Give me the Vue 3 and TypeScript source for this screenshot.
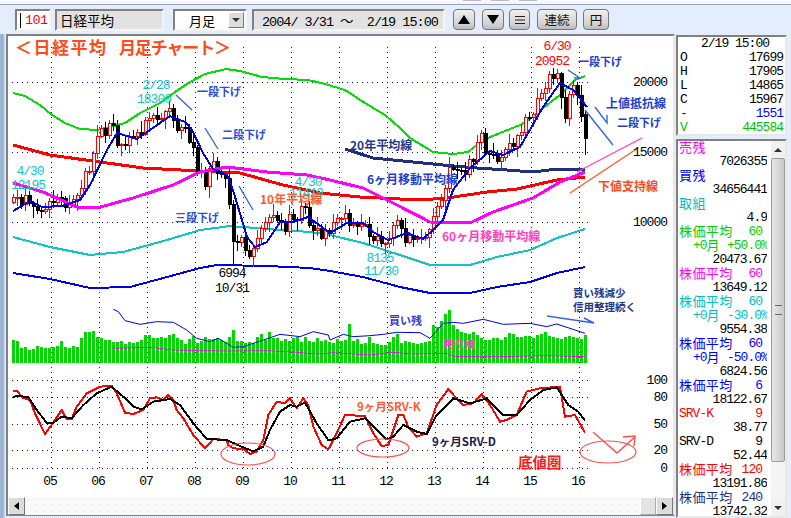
<script setup lang="ts">
import { computed } from "vue";

type Pt = [number, number];
type Note = { t: string; x: number; y: number; c: string; s?: number };
type Row = { label?: string; num?: string; value?: string; pct?: string; color: string };

const closes = [
  11715, 11761, 11236, 11858, 11325, 11081, 10823, 10771, 10899, 11488,
  11387, 11740, 11668, 11008, 11276, 11584, 11899, 12413, 13574, 13606, 14872, 16111,
  16649, 16205, 17059, 16906, 15467, 15505, 15456, 16140, 16127, 16399, 16274, 17225,
  17383, 17604, 17287, 17400, 17875, 18138, 17248, 16569, 16785, 16737, 15680, 15307,
  13592, 13603, 12525, 13849, 14338, 13481, 13376, 13072, 11259, 8576, 8512, 8859,
  7994, 7568, 8109, 8828, 9522, 9958, 10356, 10492, 10133, 10034, 9345, 10546,
  10198, 10126, 11089, 11057, 9768, 9382, 9537, 8824, 9369, 9202, 9937, 10228,
  10237, 10624, 9755, 9849, 9693, 9816, 9833, 8955, 8700, 8988, 8434, 8455,
  8802, 9723, 10083, 9520, 8542, 9006, 8758, 8839, 8870, 8928, 9446, 10395,
  11138, 11559, 12397, 13860, 13774, 13677, 13668, 13388, 14455, 14327, 15661, 16291,
  14914, 14841, 14827, 14304, 14632, 15162, 15620, 15424, 16173, 16413, 17459, 17450,
  17674, 18797, 19206, 19520, 20563, 20235, 20585, 18890, 17388, 19083, 19747, 19033,
  17518, 15967,
];

const priceY = (p: number) => 222 - (p - 10000) * 0.014;
const wick = [4, 7, 3, 9, 5, 2, 8, 4, 6, 3, 11];

const candles = computed(() =>
  closes.map((c, i) => {
    const o = i === 143 ? 17699 : i ? closes[i - 1] : 11400;
    const top = priceY(Math.max(o, c));
    const bottom = priceY(Math.min(o, c));
    let high = top - wick[i % 11];
    let low = bottom + wick[(i + 5) % 11];
    if (i === 55) low = 265;
    if (i === 135) high = 68;
    if (i === 143) {
      high = 111;
      low = 155;
    }
    return {
      x: 13 + i * 4,
      up: c >= o,
      top,
      h: Math.max(bottom - top, 1),
      high,
      low,
    };
  }),
);

const volumes = [
  23, 22, 15, 16, 13, 14, 17, 16, 15, 15, 16, 17, 22, 16, 15, 17, 16, 25, 31, 31, 32, 26, 25, 23,
  23, 21, 21, 22, 19, 21, 20, 21, 23, 28, 28, 25, 25, 26, 25, 28, 29, 25, 23, 19, 24, 27,
  20, 22, 26, 24, 24, 25, 23, 21, 26, 33, 22, 22, 20, 21, 20, 26, 29, 23, 31, 25, 25, 22,
  24, 22, 25, 26, 21, 26, 22, 21, 25, 22, 23, 21, 20, 24, 22, 23, 39, 22, 24, 19, 20, 26,
  20, 19, 18, 18, 21, 26, 29, 20, 22, 21, 20, 19, 20, 21, 22, 38, 36, 42, 49, 53, 38, 34,
  31, 30, 29, 31, 28, 25, 23, 23, 25, 25, 23, 26, 30, 29, 26, 26, 27, 27, 25, 28, 29, 31, 27, 26, 25, 24, 26, 27, 26, 25, 24, 28,
];

const line = (pts: Pt[]) => pts.map((p) => p.join(",")).join(" ");
// coordinates read off 3x crops of the two lower halves of the chart
const crop = (ox: number, oy: number, pts: Pt[]): Pt[] =>
  pts.map(([x, y]) => [ox + x / 3, oy + y / 3]);

const green: Pt[] = [
  [13, 93], [25, 96], [40, 105], [52, 115], [65, 123], [80, 129], [97, 130], [110, 127], [125, 123],
  [140, 113], [160, 103], [175, 92], [190, 82], [205, 74], [226, 69], [240, 71], [262, 77], [285, 79],
  [308, 80], [325, 84], [345, 90], [365, 103], [385, 115], [400, 128], [410, 138], [433, 152],
  [453, 154], [468, 152], [483, 140], [500, 133], [520, 125], [533, 117], [543, 108], [560, 95],
  [575, 80], [585, 76],
];
const blue6: Pt[] = [
  [13, 211], [30, 201], [42, 207], [62, 206], [80, 200], [90, 185], [107, 150], [117, 133], [137, 139],
  [150, 130], [170, 116], [185, 122], [192, 130], [203, 153], [213, 169], [227, 175], [233, 190],
  [247, 237], [255, 247], [267, 242], [280, 222], [293, 222], [308, 217], [330, 233], [347, 223],
  [363, 223], [373, 232], [388, 240], [407, 233], [423, 239], [433, 230], [443, 220], [453, 190],
  [470, 168], [490, 151], [503, 155], [520, 147], [531, 128], [543, 107], [560, 83], [573, 90], [587, 107],
];
const red120: Pt[] = [
  [13, 145], [50, 155], [100, 162], [143, 168], [200, 171], [240, 173], [283, 185], [320, 193], [330, 194],
  [360, 197], [420, 200], [447, 198], [487, 192], [517, 189], [557, 180], [585, 177],
];
const pink60: Pt[] = [
  [13, 183], [43, 192], [77, 207], [97, 208], [133, 198], [173, 185], [200, 172], [227, 167], [267, 172],
  [307, 175], [330, 180], [363, 188], [397, 205], [430, 222], [470, 223], [493, 212], [533, 198],
  [560, 182], [585, 172],
];
const teal: Pt[] = [
  [13, 237], [50, 247], [90, 255], [123, 252], [167, 240], [200, 230], [230, 226], [267, 229], [310, 232],
  [330, 235], [363, 243], [400, 255], [430, 265], [470, 265], [497, 257], [530, 250], [557, 238], [585, 229],
];
const blueLow: Pt[] = [
  [13, 273], [50, 279], [90, 288], [130, 287], [167, 277], [200, 268], [217, 265], [267, 266], [310, 268],
  [330, 271], [363, 277], [400, 287], [430, 293], [470, 293], [497, 287], [530, 282], [557, 273], [585, 267],
];
const navy: Pt[] = [
  [345, 149], [373, 158], [413, 162], [453, 166], [477, 168], [507, 170], [533, 172], [557, 169], [585, 170],
];

const buyLine: Pt[] = [
  ...crop(0, 290, [
    [340, 58], [355, 65], [375, 92], [420, 103], [470, 95], [520, 97], [560, 120], [590, 145], [630, 155],
    [655, 145], [700, 172], [730, 170], [790, 150], [840, 133], [900, 140], [940, 125], [985, 135],
  ]),
  ...crop(330, 290, [
    [0, 150], [40, 133], [70, 140], [120, 137], [160, 133], [200, 127], [270, 128], [300, 145], [340, 100],
    [370, 97], [400, 100], [460, 88], [520, 103], [600, 100], [650, 110], [680, 102], [720, 115], [765, 130],
  ]),
];
const sellLine: Pt[] = [
  ...crop(0, 290, [
    [340, 175], [450, 172], [520, 180], [600, 182], [700, 183], [800, 182], [880, 186], [950, 192], [985, 190],
  ]),
  ...crop(330, 290, [
    [0, 188], [40, 190], [120, 195], [190, 187], [250, 192], [350, 190], [370, 200], [500, 200], [650, 197], [765, 200],
  ]),
];
const srvK: Pt[] = [
  ...crop(0, 290, [
    [40, 302], [52, 303], [65, 322], [90, 330], [105, 370], [135, 432], [165, 390], [185, 360], [200, 388],
    [215, 388], [230, 350], [260, 310], [300, 290], [335, 287], [350, 310], [375, 368], [400, 372], [430, 360],
    [450, 325], [470, 322], [490, 330], [505, 315], [520, 330], [530, 360], [550, 385], [580, 435], [615, 475],
    [640, 447], [680, 450], [685, 465], [700, 475], [730, 477], [750, 492], [770, 485], [790, 450], [805, 375],
    [830, 335], [855, 340], [870, 325], [890, 355], [910, 325], [925, 345], [940, 410], [965, 465], [985, 478],
  ]),
  ...crop(330, 290, [
    [0, 470], [20, 430], [45, 375], [105, 378], [130, 430], [155, 468], [175, 465], [205, 375], [220, 375],
    [235, 410], [260, 440], [290, 430], [320, 345], [355, 297], [375, 320], [400, 345], [430, 340], [455, 312],
    [480, 345], [510, 395], [530, 390], [560, 375], [590, 305], [630, 295], [690, 290], [705, 380], [735, 375],
    [765, 428],
  ]),
];
const srvD: Pt[] = [
  ...crop(0, 290, [
    [40, 320], [60, 318], [85, 322], [110, 360], [140, 398], [160, 398], [185, 380], [215, 385], [250, 345],
    [290, 310], [335, 290], [370, 320], [400, 350], [425, 358], [460, 335], [510, 327], [540, 345], [580, 400],
    [620, 447], [680, 450], [720, 468], [760, 484], [790, 470], [810, 420], [840, 365], [870, 345], [890, 350],
    [915, 338], [950, 400], [985, 450],
  ]),
  ...crop(330, 290, [
    [0, 450], [20, 445], [60, 395], [105, 385], [130, 410], [170, 448], [190, 440], [220, 405], [260, 425],
    [290, 432], [320, 375], [370, 325], [420, 340], [470, 325], [520, 375], [560, 375], [600, 330], [640, 300],
    [680, 292], [715, 345], [745, 365], [765, 392],
  ]),
];

const curves = [
  { pts: green, color: "#00e000", w: 2 },
  { pts: teal, color: "#10c4c4", w: 2 },
  { pts: blueLow, color: "#0000e8", w: 2 },
  { pts: navy, color: "#1f2f80", w: 3 },
  { pts: red120, color: "#ff0000", w: 3 },
  { pts: pink60, color: "#ff00ff", w: 3 },
  { pts: blue6, color: "#0000f0", w: 2 },
];

const vGrid = Array.from({ length: 12 }, (_, i) => 51.5 + i * 48);
const hGrid = [82.5, 152.5, 222.5, 380.5, 397.5, 424.5, 450.5, 468.5];
const years = ["05", "06", "07", "08", "09", "10", "11", "12", "13", "14", "15", "16"];

const axis: Note[] = [
  { t: "20000", x: 667, y: 86, c: "#000" },
  { t: "15000", x: 667, y: 156, c: "#000" },
  { t: "10000", x: 667, y: 226, c: "#000" },
  { t: "100", x: 667, y: 384, c: "#000" },
  { t: "80", x: 667, y: 401, c: "#000" },
  { t: "50", x: 667, y: 428, c: "#000" },
  { t: "20", x: 667, y: 454, c: "#000" },
  { t: "0", x: 667, y: 472, c: "#000" },
];

const priceNotes: Note[] = [
  { t: "4/30", x: 30, y: 175, c: "#10c4c4" },
  { t: "12195", x: 28, y: 189, c: "#10c4c4" },
  { t: "2/28", x: 156, y: 89, c: "#10c4c4" },
  { t: "18300", x: 154, y: 103, c: "#10c4c4" },
  { t: "4/30", x: 308, y: 186, c: "#10c4c4" },
  { t: "11410", x: 306, y: 197, c: "#10c4c4" },
  { t: "6994", x: 232, y: 277, c: "#000" },
  { t: "10/31", x: 232, y: 292, c: "#000" },
  { t: "8135", x: 380, y: 262, c: "#10c4c4" },
  { t: "11/30", x: 381, y: 275, c: "#10c4c4" },
  { t: "6/30", x: 557, y: 50, c: "#ff0000" },
  { t: "20952", x: 552, y: 65, c: "#ff0000" },
];

const labels: Note[] = [
  { t: "一段下げ", x: 197, y: 96, c: "#2a50d8", s: 11 },
  { t: "二段下げ", x: 222, y: 139, c: "#2a50d8", s: 11 },
  { t: "三段下げ", x: 175, y: 222, c: "#2a50d8", s: 11 },
  { t: "10年平均線", x: 260, y: 204, c: "#ff5a30", s: 12 },
  { t: "20年平均線", x: 350, y: 150, c: "#1f3a8a", s: 12 },
  { t: "6ヶ月移動平均線", x: 367, y: 184, c: "#2040d0", s: 12 },
  { t: "60ヶ月移動平均線", x: 442, y: 241, c: "#ff40c0", s: 12 },
  { t: "下値支持線", x: 598, y: 191, c: "#ff4a1a", s: 12 },
  { t: "上値抵抗線", x: 606, y: 108, c: "#2040d0", s: 12 },
  { t: "二段下げ", x: 617, y: 127, c: "#2040d0", s: 11 },
  { t: "一段下げ", x: 578, y: 66, c: "#2040d0", s: 11 },
  { t: "買い残減少", x: 573, y: 297, c: "#1f3a8a", s: 10.5 },
  { t: "信用整理続く", x: 573, y: 311, c: "#1f3a8a", s: 10.5 },
  { t: "買い残", x: 389, y: 325, c: "#3a3ad0", s: 11 },
  { t: "売り残", x: 443, y: 348, c: "#ff40c0", s: 10.5 },
  { t: "9ヶ月SRV-K", x: 357, y: 411, c: "#ff5a30", s: 11.5 },
  { t: "9ヶ月SRV-D", x: 432, y: 446, c: "#1a1a50", s: 11.5 },
  { t: "底値圏", x: 518, y: 468, c: "#ff1a1a", s: 14.5 },
];

const strokes = [
  { p: "176,95 192,110", c: "#3366dd" },
  { p: "205,128 218,149", c: "#3366dd" },
  { p: "239,186 253,210", c: "#3366dd" },
  { p: "568,70 580,78 574,78", c: "#3366dd" },
  { p: "585,110 613,145", c: "#3366dd" },
  { p: "595,107 607,123 607,115", c: "#3366dd" },
  { p: "577,172 642,138", c: "#ff40c0" },
  { p: "570,193 638,148", c: "#ff5a30" },
  { p: "547,316 594,323 584,318", c: "#3366dd" },
  { p: "593,432 617,453 635,437", c: "#ff5050" },
  { p: "623,437 635,436 634,446", c: "#ff5050" },
];

const ellipses = [
  { cx: 248, cy: 454, rx: 27, ry: 11 },
  { cx: 383, cy: 448, rx: 26, ry: 9 },
  { cx: 608, cy: 452, rx: 28, ry: 11 },
];

const quote = [
  { k: "O", v: "17699", c: "#000" },
  { k: "H", v: "17905", c: "#000" },
  { k: "L", v: "14865", c: "#000" },
  { k: "C", v: "15967", c: "#000" },
  { k: "-", v: "1551", c: "#0000ff" },
  { k: "V", v: "445584", c: "#00c000" },
];

const GREEN = "#00d000";
const PINK = "#ff00ff";
const TEAL = "#00c0c0";
const BLUE = "#0000ff";
const RED = "#ff0000";
const NAVY = "#1f2f80";
const rows: Row[] = [
  { label: "売残", color: PINK },
  { value: "7026355", color: "#000" },
  { label: "買残", color: BLUE },
  { value: "34656441", color: "#000" },
  { label: "取組", color: TEAL },
  { value: "4.9", color: "#000" },
  { label: "株価平均", num: "60", color: GREEN },
  { pct: "+50.0%", color: GREEN },
  { value: "20473.67", color: "#000" },
  { label: "株価平均", num: "60", color: PINK },
  { value: "13649.12", color: "#000" },
  { label: "株価平均", num: "60", color: TEAL },
  { pct: "-30.0%", color: TEAL },
  { value: "9554.38", color: "#000" },
  { label: "株価平均", num: "60", color: BLUE },
  { pct: "-50.0%", color: BLUE },
  { value: "6824.56", color: "#000" },
  { label: "株価平均", num: "6", color: BLUE },
  { value: "18122.67", color: "#000" },
  { label: "SRV-K", num: "9", color: RED },
  { value: "38.77", color: "#000" },
  { label: "SRV-D", num: "9", color: "#000" },
  { value: "52.44", color: "#000" },
  { label: "株価平均", num: "120", color: RED },
  { value: "13191.86", color: "#000" },
  { label: "株価平均", num: "240", color: NAVY },
  { value: "13742.32", color: "#000" },
];

const isAscii = (s: string) => /^[\x20-\x7e]+$/.test(s);
</script>

<template>
  <div class="window">
    <div class="top-strip"><span></span><span></span><span></span></div>
    <div class="toolbar">
      <div class="field code"><span class="caret"></span>101</div>
      <div class="field name">日経平均</div>
      <div class="field select">
        <span class="select-text">月足</span>
        <span class="select-btn"><i class="tri-down small"></i></span>
      </div>
      <div class="field dates">2004/ 3/31 ～&nbsp; 2/19 15:00</div>
      <button class="btn up"><i class="tri-up"></i></button>
      <button class="btn down"><i class="tri-down"></i></button>
      <button class="btn menu">
        <svg width="12" height="10" viewBox="0 0 12 10" aria-hidden="true">
          <path d="M1 1.5h10M1 5h10M1 8.5h10" stroke="#222" stroke-width="1" fill="none" />
        </svg>
      </button>
      <button class="btn wide">連続</button>
      <button class="btn yen">円</button>
    </div>

    <div class="main">
      <div class="edge"></div>
      <div class="chart-box">
        <svg class="chart" width="664" height="461" viewBox="8 36 664 461">
          <g class="grid">
            <line v-for="x in vGrid" :key="x" :x1="x" :x2="x" y1="47" y2="469" />
            <line v-for="y in hGrid" :key="y" x1="12" x2="588" :y1="y" :y2="y" />
          </g>

          <g class="vol">
            <rect v-for="(h, i) in volumes" :key="i" :x="12 + i * 4" :y="363 - h" width="3" :height="h" />
          </g>
          <polyline :points="line(buyLine)" class="thin" stroke="#0000e8" />
          <polyline :points="line(sellLine)" class="thin" stroke="#ff00ff" />

          <polyline
            v-for="c in curves.slice(0, 5)"
            :key="c.color"
            :points="line(c.pts)"
            class="curve"
            :stroke="c.color"
            :stroke-width="c.w"
          />
          <g v-for="(c, i) in candles" :key="i" class="candle">
            <line :x1="c.x + 0.5" :x2="c.x + 0.5" :y1="c.high" :y2="c.low" :stroke="c.up ? '#ff0000' : '#000'" />
            <rect
              :x="c.x - 1"
              :y="c.top"
              width="3"
              :height="c.h"
              :fill="c.up ? '#fff' : '#000'"
              :stroke="c.up ? '#ff0000' : '#000'"
            />
          </g>
          <polyline
            v-for="c in curves.slice(5)"
            :key="c.color"
            :points="line(c.pts)"
            class="curve"
            :stroke="c.color"
            :stroke-width="c.w"
          />

          <polyline :points="line(srvK)" class="curve" stroke="#ff0000" stroke-width="2" />
          <polyline :points="line(srvD)" class="curve" stroke="#000" stroke-width="2" />

          <polyline v-for="(s, i) in strokes" :key="i" :points="s.p" class="mark" :stroke="s.c" />
          <ellipse v-for="(e, i) in ellipses" :key="i" v-bind="e" class="ring" />

          <text class="title" x="15" y="54" textLength="91">＜日経平均</text>
          <text class="title" x="119" y="54" textLength="112">月足チャート＞</text>
          <text v-for="(n, i) in priceNotes" :key="i" class="mono" text-anchor="middle" :x="n.x" :y="n.y" :fill="n.c">{{ n.t }}</text>
          <text v-for="(n, i) in axis" :key="'a' + i" class="mono" text-anchor="end" :x="n.x" :y="n.y" :fill="n.c">{{ n.t }}</text>
          <text v-for="(y, i) in years" :key="y" class="mono" text-anchor="middle" :x="50 + i * 48" y="485" fill="#000">{{ y }}</text>
          <text v-for="(n, i) in labels" :key="'l' + i" class="label" :x="n.x" :y="n.y" :fill="n.c" :font-size="n.s">{{ n.t }}</text>
        </svg>
        <div class="hscroll">
          <span class="sb-btn"><i class="tri-left"></i></span>
          <span class="sb-track"></span>
          <span class="sb-thumb"></span>
          <span class="sb-btn"><i class="tri-right"></i></span>
        </div>
      </div>

      <div class="side">
        <div class="quote panel">
          <div class="quote-date">2/19 15:00</div>
          <div v-for="q in quote" :key="q.k" class="quote-row" :style="{ color: q.c }">
            <span>{{ q.k }}</span><span>{{ q.v }}</span>
          </div>
        </div>
        <div class="list panel">
          <div class="rows">
            <div v-for="(r, i) in rows" :key="i" class="row" :style="{ color: r.color }">
              <template v-if="r.label">
                <span :class="{ cjk: !isAscii(r.label) }">{{ r.label }}</span><span class="num">{{ r.num }}</span>
              </template>
              <span v-else-if="r.pct" class="indent"><span>+0</span><span class="cjk">月</span><span class="pct">{{ r.pct }}</span></span>
              <span v-else class="value">{{ r.value }}</span>
            </div>
          </div>
          <div class="vscroll">
            <span class="vs-btn"><i class="tri-up small"></i></span>
            <span class="vs-thumb"><em></em></span>
            <span class="vs-rest"></span>
            <span class="vs-btn"><i class="tri-down small"></i></span>
          </div>
        </div>
      </div>
    </div>
  </div>
</template>

<style>
html,
body {
  margin: 0;
  overflow: hidden;
}
</style>

<style scoped>
.window {
  width: 791px;
  height: 518px;
  overflow: hidden;
  background: #e4edfb;
  font-family: "Liberation Mono", "Noto Sans CJK JP", monospace;
  color: #000;
  display: flex;
  flex-direction: column;
}
.top-strip {
  height: 4px;
  background: #f4f8fe;
  border-bottom: 1px solid #9aa4b4;
  flex: none;
  display: flex;
  align-items: flex-start;
  gap: 10px;
  padding-left: 463px;
}
.top-strip span {
  width: 18px;
  height: 1px;
  background: #b8bcc2;
}
.toolbar {
  height: 29px;
  flex: none;
  display: flex;
  align-items: flex-start;
  padding: 4px 0 0 15px;
  box-sizing: border-box;
}
.field {
  height: 22px;
  box-sizing: border-box;
  border: 2px solid;
  border-color: #808080 #f4f4f4 #f4f4f4 #808080;
  display: flex;
  align-items: center;
  font-size: 13.5px;
  font-family: "Noto Sans CJK JP", "Liberation Mono", monospace;
  background: #e2e2e2;
}
.code {
  width: 36px;
  background: #fff;
  color: #ff0000;
  font-family: "Liberation Mono", monospace;
  letter-spacing: -0.6px;
  gap: 4px;
  padding-left: 3px;
}
.caret {
  width: 1px;
  height: 15px;
  background: #000;
}
.name {
  width: 109px;
  margin-left: 4px;
  padding-left: 3px;
}
.select {
  width: 74px;
  margin-left: 9px;
  background: #fff;
  justify-content: space-between;
}
.select-text {
  padding-left: 14px;
  font-size: 13px;
}
.select-btn {
  width: 16px;
  height: 16px;
  margin-right: 1px;
  background: #dcdcdc;
  border: 1px solid;
  border-color: #fff #777 #777 #fff;
  box-sizing: border-box;
  display: flex;
  align-items: center;
  justify-content: center;
}
.dates {
  width: 193px;
  margin-left: 5px;
  padding-left: 8px;
  font-family: "Liberation Mono", "Noto Sans CJK JP", monospace;
  letter-spacing: -1px;
  font-size: 13.5px;
  white-space: pre;
}
.btn {
  height: 21px;
  box-sizing: border-box;
  border: 1px solid #777;
  border-radius: 4px;
  background: linear-gradient(#f0f0f0, #d4d4d4 70%, #bcbcbc);
  padding: 0;
  display: flex;
  align-items: center;
  justify-content: center;
  font-family: "Noto Sans CJK JP", sans-serif;
  font-size: 12.5px;
  color: #111;
}
.up {
  width: 22px;
  margin-left: 8px;
}
.down {
  width: 22px;
  margin-left: 7px;
}
.menu {
  width: 21px;
  margin-left: 5px;
}
.wide {
  width: 40px;
  margin-left: 7px;
}
.yen {
  width: 26px;
  margin-left: 6px;
}
.tri-up,
.tri-down {
  display: block;
  width: 0;
  height: 0;
  border-left: 6px solid transparent;
  border-right: 6px solid transparent;
}
.tri-up {
  border-bottom: 9px solid #000;
}
.tri-down {
  border-top: 9px solid #000;
}
.tri-up.small {
  border-left-width: 4px;
  border-right-width: 4px;
  border-bottom-width: 4px;
  border-bottom-color: #333;
}
.tri-down.small {
  border-left-width: 4px;
  border-right-width: 4px;
  border-top-width: 4px;
  border-top-color: #333;
}
.main {
  flex: 1;
  display: flex;
  min-height: 0;
}
.edge {
  width: 5px;
  flex: none;
  background: linear-gradient(90deg, #a8b6c8, #8fb2e0 60%, #d4e2f6);
}
.chart-box {
  width: 669px;
  height: 482px;
  margin-left: 1px;
  flex: none;
  box-sizing: border-box;
  border: 2px solid;
  border-color: #808080 #e8e8e8 #808080 #808080;
  background: #fff;
  display: flex;
  flex-direction: column;
}
.chart {
  display: block;
  flex: none;
}
.grid line {
  stroke: #0000e0;
  stroke-width: 1;
  stroke-dasharray: 1 4;
  shape-rendering: crispEdges;
}
.vol rect {
  fill: #00d800;
  shape-rendering: crispEdges;
}
.thin {
  fill: none;
  stroke-width: 1;
}
.curve {
  fill: none;
  stroke-linejoin: round;
  shape-rendering: crispEdges;
}
.candle line,
.candle rect {
  stroke-width: 1;
  shape-rendering: crispEdges;
}
.mark {
  fill: none;
  stroke-width: 1.4;
}
.ring {
  fill: none;
  stroke: #ff5050;
  stroke-width: 1.2;
}
.title {
  font-family: "Noto Sans CJK JP", sans-serif;
  font-weight: 700;
  font-size: 17px;
  fill: #ff4a1a;
}
.mono {
  font-family: "Liberation Mono", monospace;
  font-size: 13px;
  letter-spacing: -1px;
}
.label {
  font-family: "Noto Sans CJK JP", sans-serif;
  font-weight: 700;
}
.hscroll {
  height: 18px;
  flex: none;
  display: flex;
  background: repeating-conic-gradient(#f2f2f2 0 25%, #fff 0 50%) 0 0 / 2px 2px;
}
.sb-btn {
  width: 17px;
  box-sizing: border-box;
  background: #dcdcdc;
  border: 1px solid;
  border-color: #fff #777 #777 #fff;
  display: flex;
  align-items: center;
  justify-content: center;
}
.sb-track {
  flex: 1;
}
.sb-thumb {
  width: 16px;
  background: #e4e4e4;
  border: 1px solid;
  border-color: #fff #aaa #aaa #fff;
  box-sizing: border-box;
}
.tri-left,
.tri-right {
  display: block;
  width: 0;
  height: 0;
  border-top: 4px solid transparent;
  border-bottom: 4px solid transparent;
}
.tri-left {
  border-right: 5px solid #000;
}
.tri-right {
  border-left: 5px solid #000;
}
.side {
  width: 111px;
  margin-left: 1px;
  flex: none;
  display: flex;
  flex-direction: column;
  gap: 3px;
  padding-top: 1px;
}
.panel {
  box-sizing: border-box;
  border: 2px solid;
  border-color: #808080 #e8e8e8 #e8e8e8 #808080;
  background: #fff;
}
.quote {
  height: 101px;
  font-size: 13px;
  letter-spacing: -1px;
  padding: 0 2px 0 2px;
}
.quote-date {
  height: 14px;
  line-height: 14px;
  text-align: right;
  padding-right: 14px;
}
.quote-row {
  height: 14px;
  line-height: 14px;
  display: flex;
  justify-content: space-between;
}
.list {
  height: 379px;
  display: flex;
  overflow: hidden;
}
.rows {
  width: 89px;
  margin-right: 4px;
  flex: none;
  overflow-x: clip;
  padding-left: 1px;
  box-sizing: border-box;
}
.row {
  height: 14px;
  line-height: 14px;
  display: flex;
  align-items: flex-start;
  justify-content: space-between;
  font-size: 13px;
  letter-spacing: -1px;
  white-space: nowrap;
  font-family: "Liberation Mono", monospace;
}
.cjk {
  display: block;
  height: 14px;
  margin-top: -1px;
  line-height: 14px;
  font-family: "Noto Sans CJK JP", sans-serif;
  font-size: 13px;
  letter-spacing: 0.4px;
}
.row .num {
  padding-right: 5px;
}
.indent {
  display: flex;
  align-items: flex-start;
  padding-left: 14px;
}
.pct {
  padding-left: 7px;
}
.value {
  margin-left: auto;
}
.vscroll {
  width: 14px;
  flex: none;
  display: flex;
  flex-direction: column;
  background: #f4f4f4;
}
.vs-btn {
  height: 17px;
  flex: none;
  display: flex;
  align-items: center;
  justify-content: center;
  background: #f0f0f0;
}
.vs-thumb {
  height: 304px;
  flex: none;
  box-sizing: border-box;
  border: 1px solid #9a9a9a;
  border-radius: 2px;
  background: linear-gradient(90deg, #e8e8e8, #c8c8c8);
  display: flex;
  align-items: flex-end;
  justify-content: center;
  padding-bottom: 146px;
}
.vs-thumb em {
  width: 7px;
  height: 8px;
  border-top: 1px solid #666;
  border-bottom: 1px solid #666;
}
.vs-rest {
  flex: 1;
}
</style>
